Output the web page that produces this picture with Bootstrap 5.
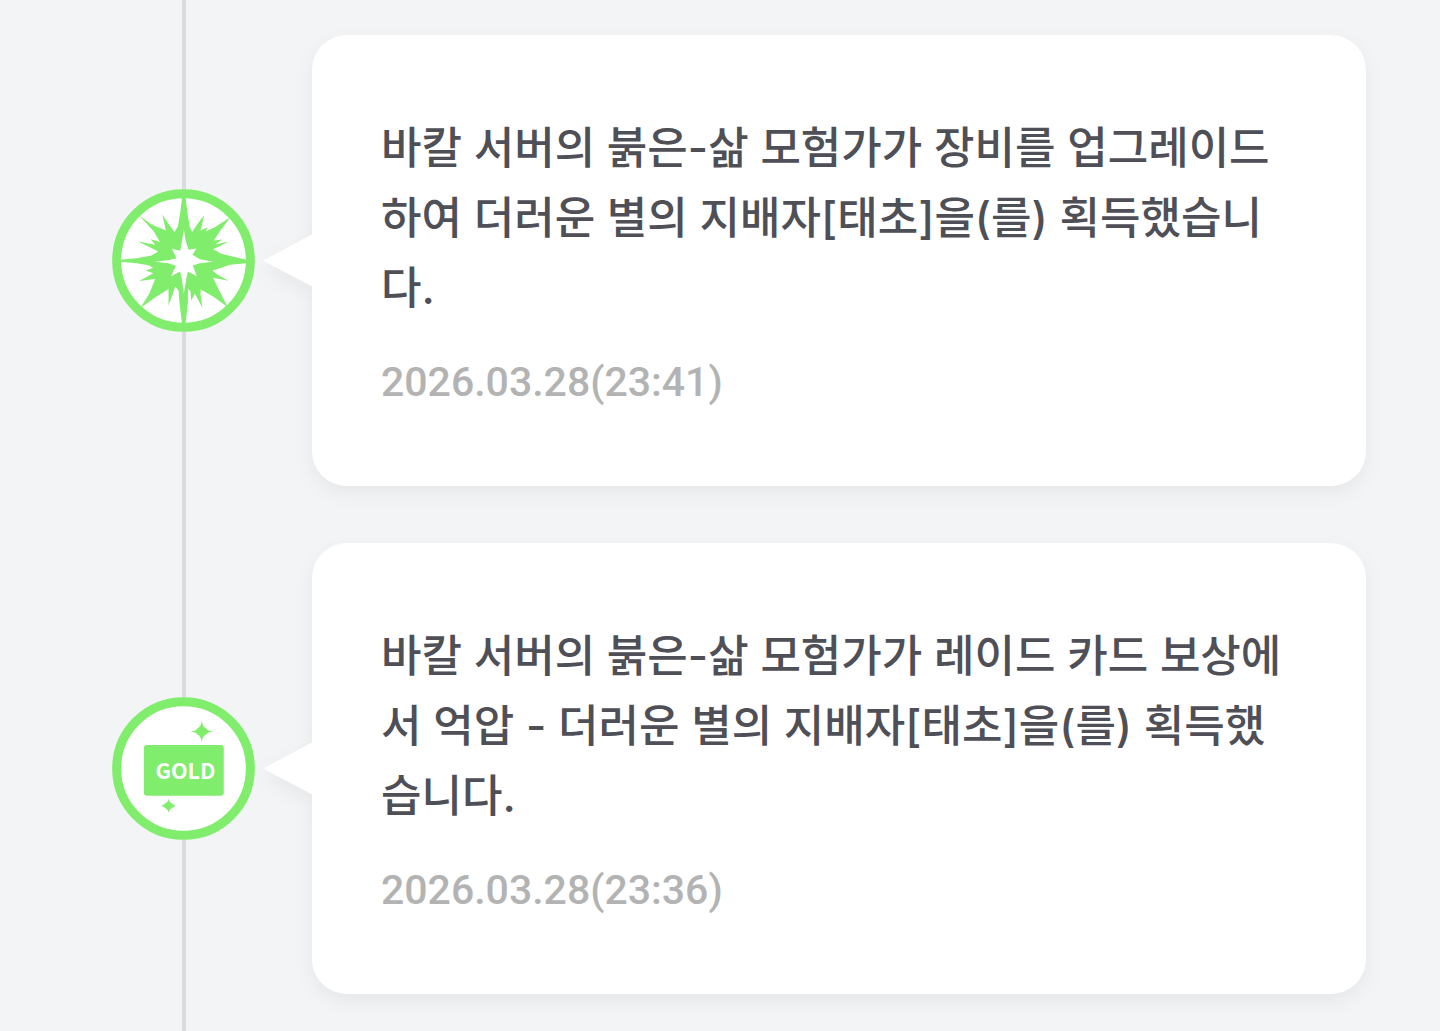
<!DOCTYPE html>
<html lang="ko">
<head>
<meta charset="utf-8">
<meta name="viewport" content="width=device-width, initial-scale=1">
<title>타임라인</title>
<link href="https://cdn.jsdelivr.net/npm/bootstrap@5.3.0/dist/css/bootstrap.min.css" rel="stylesheet">
<style>
  body { background: #f2f4f5; font-family: Inter, "Noto Sans CJK KR", sans-serif; }
  .timeline {
    padding: 7px 74px 0 112px;
    background: linear-gradient(#dadbdd, #dadbdd) 182px 0 / 4px 100% no-repeat;
  }
  .timeline-item { padding: 28px 0 29px; gap: 57px; }
  .timeline-icon { width: 143px; height: 143px; }
  .bubble {
    padding: 78px 69px;
    border-radius: 35px;
    filter: drop-shadow(0 7px 9px rgba(0, 0, 0, .05));
  }
  .bubble::before {
    content: "";
    position: absolute;
    top: 50%;
    right: 100%;
    width: 49px;
    height: 52px;
    background: #fff;
    transform: translateY(-50%);
    clip-path: polygon(0 50%, 100% 0, 100% 100%);
  }
  .message { color: #4f4f57; font-size: 44px; font-weight: 500; line-height: 70px; margin-bottom: 33px; }
  .stamp { color: #b3b3b3; font-family: Roboto, "Noto Sans CJK KR", sans-serif; font-size: 41px; font-weight: 500; line-height: 52px; }
</style>
</head>
<body>
<main>
  <ol class="timeline list-unstyled min-vh-100 mb-0">
    <li class="timeline-item d-flex align-items-center">
      <svg class="timeline-icon flex-shrink-0" viewBox="36 27 430 430" aria-hidden="true">
        <circle cx="251" cy="242" r="201" fill="#fff" stroke="#80ed6c" stroke-width="27"/>
        <path fill="#80ed6c" d="M247 50H257L263 100 270 142 277 156 292 134 313 106 306 138 302 152 324 142 318 154 344 143 392 112 362 152 342 182 368 179 346 194 386 185 362 198 340 208 365 222 440 240V250L390 255 365 264 338 272 352 284 386 303 340 294 356 328 384 382 340 350 303 329 302 345 308 384 285 342 274 362 272 335 265 328 264 370 257 434H247L240 380 236 332 226 320 218 345 206 378 206 328 170 350 122 384 148 342 166 298 118 304 160 280 138 272 160 264 145 256 110 250 62 246V240L110 235 155 227 175 215 150 202 114 185 166 195 152 178 180 186 162 155 117 106 152 132 198 152 187 104 206 132 224 156 234 140 241 100Z"/>
        <path fill="#fff" d="M252 148 257 180 266 210 290 206 278 225 300 238 340 246 300 250 279 257 291 289 264 275 259 300 252 342 246 300 241 275 213 290 228 258 205 250 165 246 205 241 230 235 216 207 241 213 247 180Z"/>
      </svg>
      <article class="bubble position-relative flex-grow-1 bg-white">
        <p class="message">바칼 서버의 붉은-삶 모험가가 장비를 업그레이드하여 더러운 별의 지배자[태초]을(를) 획득했습니다.</p>
        <time class="stamp d-block" datetime="2026-03-28T23:41">2026.03.28(23:41)</time>
      </article>
    </li>
    <li class="timeline-item d-flex align-items-center">
      <svg class="timeline-icon flex-shrink-0" viewBox="36 21 430 430" aria-hidden="true">
        <circle cx="251" cy="236" r="201" fill="#fff" stroke="#80ed6c" stroke-width="27"/>
        <rect x="132" y="165" width="240" height="153" rx="9" fill="#80ed6c"/>
        <path fill="#80ed6c" d="M306 92Q308 111 319 116 323 123 340 125 323 127 319 134 308 139 306 158 304 139 293 134 289 127 272 125 289 123 293 116 304 111 306 92ZM206 326Q208 338 215 340 219 346 229 348 219 350 215 356 208 358 206 370 204 358 197 356 193 350 183 348 193 346 197 340 204 338 206 326Z"/>
        <text x="257" y="268" text-anchor="middle" font-family="Noto Sans CJK KR, sans-serif" font-weight="700" font-size="65" fill="#fff">GOLD</text>
      </svg>
      <article class="bubble position-relative flex-grow-1 bg-white">
        <p class="message">바칼 서버의 붉은-삶 모험가가 레이드 카드 보상에서 억압 - 더러운 별의 지배자[태초]을(를) 획득했습니다.</p>
        <time class="stamp d-block" datetime="2026-03-28T23:36">2026.03.28(23:36)</time>
      </article>
    </li>
  </ol>
</main>
<script src="https://cdn.jsdelivr.net/npm/bootstrap@5.3.0/dist/js/bootstrap.bundle.min.js"></script>
</body>
</html>
